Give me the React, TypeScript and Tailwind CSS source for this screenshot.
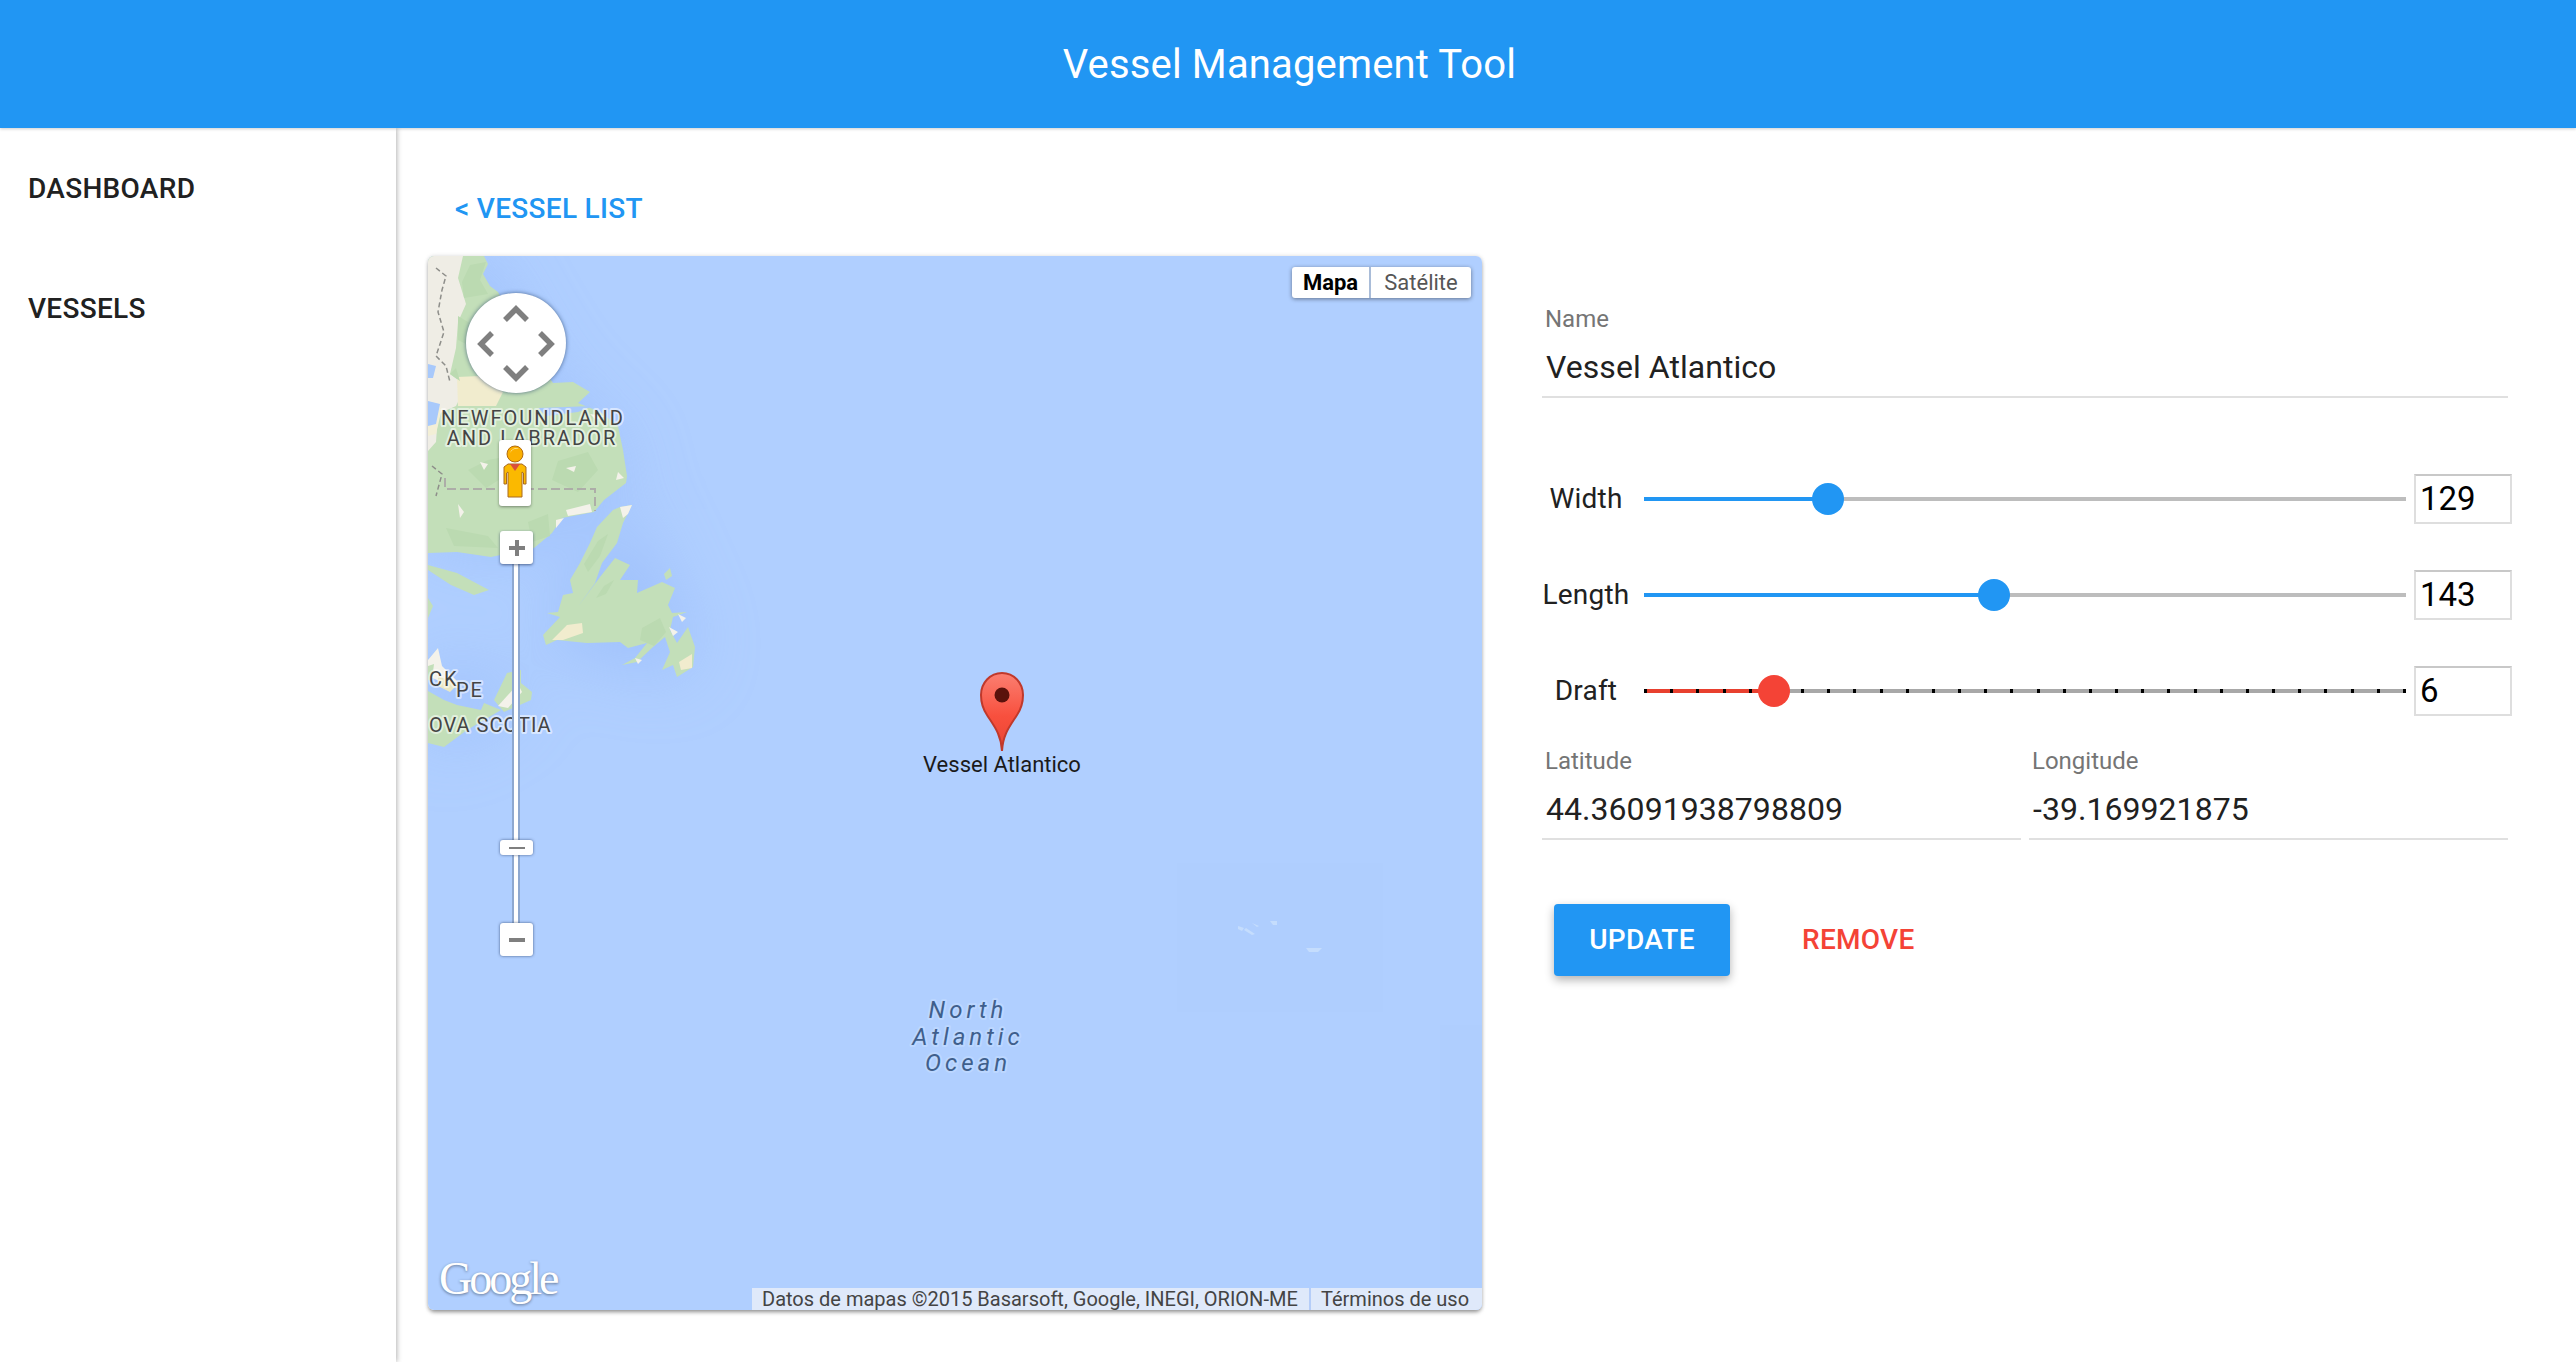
const ticks = Array.from({ length: 30 }, (_, i) => i);

function Slider({ label, value, left, red }: { label: string; value: string; left: string; red?: boolean }) {
  return (
    <div className="flex h-[50px] items-center">
      <div className="w-[88px] text-center text-[28px] tracking-[0.2px] text-[#212121]">{label}</div>
      <div className={`relative ml-[14px] flex h-[4px] w-[762px] justify-between ${red ? "bg-[#a8a8a8]" : "bg-[#bdbdbd]"}`}>
        {red && ticks.map((t) => <span key={t} className="z-10 h-[4px] w-[3px] bg-black" />)}
        <div className={`absolute top-0 left-0 h-[4px] ${left} ${red ? "bg-[#e8402f]" : "bg-[#2196f3]"}`} />
        <div
          className={`absolute top-[-14px] z-20 h-[32px] w-[32px] rounded-full ${left === "w-[184px]" ? "left-[168px]" : left === "w-[350px]" ? "left-[334px]" : "left-[114px]"} ${red ? "bg-[#f44336]" : "bg-[#2196f3]"}`}
        />
      </div>
      <div className="ml-[8px] h-[50px] w-[98px] border-2 border-[#dedede] border-t-[#c8c8c8] pl-[4px] text-[33px] leading-[46px] text-black">
        {value}
      </div>
    </div>
  );
}

function Field({ label, value, className }: { label: string; value: string; className?: string }) {
  return (
    <div className={className}>
      <div className="h-[28px] pl-[3px] text-[24px] leading-[28px] text-[#757575]">{label}</div>
      <div className="mt-[16px] h-[49px] border-b-2 border-[#e0e0e0] pl-[4px] text-[32px] leading-[36px] tracking-[0.05px] text-[#212121]">
        {value}
      </div>
    </div>
  );
}

function MapArt() {
  const label = { paintOrder: "stroke" as const };
  return (
    <svg className="absolute inset-0 h-full w-full" viewBox="0 0 1054 1054">
      <defs>
        <filter id="halo" x="-50%" y="-50%" width="200%" height="200%">
          <feGaussianBlur stdDeviation="34" />
        </filter>
      </defs>
      <rect width="1054" height="1054" fill="#b0cfff" />
      <rect x="749" y="607" width="206" height="149" fill="#afcefe" />
      <rect x="1012" y="769" width="42" height="285" fill="#afcefe" />
      <g filter="url(#halo)" fill="#94b8fa" opacity="0.6">
        <path d="M0 0H56L70 36L125 127L195 194L198 227L106 292L0 297Z" />
        <path d="M204 249L267 391L249 421L115 389L142 324Z" />
        <path d="M0 400L104 436L76 456L16 491L0 487Z" />
      </g>
      {/* mainland */}
      <path
        fill="#c3dfb9"
        d="M0 0H56L60 8L55 18L62 30L70 36L100 90L125 127L145 126L162 136L150 147L172 156L190 170L195 194L199 220L198 227L176 244L166 256L134 262L124 277L106 292L63 301L29 296L0 297Z"
      />
      <path fill="#efede5" d="M0 0H35L30 22L38 48L30 66L28 92L22 118L38 130L28 150L10 158L8 186L0 195Z" />
      <path fill="#f1ecce" d="M29 121L52 120L75 136L68 150L30 150Z" />
      <path fill="#f3efd6" d="M0 150L14 152L8 178L0 180Z" />
      <path fill="#bbdab1" d="M42 9L58 6L52 24L60 38L36 42L34 26Z M30 60L50 72L42 90L30 84Z M32 125L22 118L28 112Z M60 204L82 200L90 212L58 232L40 214Z M130 205L160 196L170 214L150 236L124 224Z M18 272L60 280L70 292L26 290Z M100 266L120 258L122 280L104 286Z" />
      <path fill="#a8c9fb" d="M0 108L8 110L5 122L0 122Z M0 145L12 148L8 168L0 170Z M110 152L165 150L150 156L118 160Z M70 60L76 64L70 70Z" />
      <path fill="#f4f2ea" d="M138 254L162 248L164 256L140 260Z M128 264L136 262L128 272Z M190 216L196 222L188 224Z M30 248L36 256L32 262Z M138 212L148 210L146 216Z M52 206L60 208L56 214Z M162 158L176 160L168 164Z" />
      <path fill="none" stroke="#adadA8" strokeWidth="2" strokeDasharray="9 4" d="M17 222V233H167V255" />
      <path fill="none" stroke="#8e8e8a" strokeWidth="1.5" strokeDasharray="5 3" d="M8 12L18 20L14 34L10 56L16 76L8 100L18 110L22 126M4 210L14 218L8 240" />
      {/* Anticosti */}
      <path fill="#c3dfb9" d="M0 309L29 317L61 334L46 339L23 329L0 314Z" />
      <path fill="#c3dfb9" d="M0 342L5 350L0 362Z" />
      {/* Newfoundland */}
      <path
        fill="#c3dfb9"
        d="M204 249L192 251L185 254L169 271L162 287L152 307L142 324L145 337L135 339L130 356L119 357L132 361L115 379L118 389L129 384L159 387L192 386L200 392L219 387L207 402L194 409L209 406L225 391L237 381L242 396L234 414L245 409L249 421L265 411L267 391L260 371L249 387L242 374L245 361L259 356L244 357L240 349L247 332L234 326L209 337L210 324L192 324L202 309L187 302L172 321L149 352L167 327L174 307L189 287L195 267Z"
      />
      <path fill="#bbdab1" d="M170 285L180 278L172 300L160 316L156 308Z M176 330L186 324L178 338L168 342Z M214 372L232 362L238 376L226 390L212 384Z" />
      <path fill="#f1ecce" d="M124 384L139 369L154 367L155 377L135 384Z M251 406L264 398L264 412L253 414Z" />
      <path fill="#f4f2ea" d="M192 251L204 249L200 258L195 262Z M241 371L250 376L245 380Z M250 358L258 362L254 366Z M207 402L214 404L210 408Z" />
      <path fill="#c3dfb9" d="M236 318L242 312L244 320L238 324Z" />
      {/* Maritimes */}
      <path fill="#c3dfb9" d="M93 414L79 417L66 444L76 456L103 444L104 436L93 427Z" />
      <path fill="#f4f2ea" d="M70 450L90 428L94 436L80 452Z" />
      <path fill="#c3dfb9" d="M0 435L16 444L29 449L53 454L56 447L73 454L39 474L16 491L0 487Z" />
      <path fill="#f4f2ea" d="M0 404L10 392L14 410L30 426L18 428L0 420Z" />
      <path fill="#e9e8c4" d="M10 420L30 428L22 436L10 430Z" />
      <path fill="#c3dfb9" d="M0 410L6 408L4 424L0 424Z" />
      {/* Azores */}
      <path fill="#c5ddfd" d="M810 670L816 672L814 675L810 673Z M818 672L827 678L824 679L816 674Z M824 667L831 670L829 671Z M842 665L849 665L849 669L845 669Z M878 692L894 692L890 696L881 696Z" />
      <g fontFamily="Roboto, sans-serif" style={label} strokeLinejoin="round">
        <g fontSize="20" letterSpacing="2" fill="#444" stroke="#ffffff" strokeOpacity="0.55" strokeWidth="4" textAnchor="middle" style={label}>
          <text x="105" y="169" style={label}>NEWFOUNDLAND</text>
          <text x="104" y="189" style={label}>AND LABRADOR</text>
        </g>
        <g fontSize="20" letterSpacing="2" fill="#444" stroke="#ffffff" strokeOpacity="0.5" strokeWidth="4" style={label}>
          <text x="1" y="430" style={label}>CK</text>
          <text x="28" y="441" style={label}>PE</text>
          <text x="1" y="476" letterSpacing="1" style={label}>OVA SCOTIA</text>
        </g>
        <g fontSize="24" letterSpacing="4" fontStyle="italic" fill="#3f5f8c" stroke="#bcd7ff" strokeWidth="4" textAnchor="middle" style={label}>
          <text x="540" y="762" style={label}>North</text>
          <text x="540" y="789" style={label}>Atlantic</text>
          <text x="540" y="815" style={label}>Ocean</text>
        </g>
        <text x="574" y="516" fontSize="22" fill="#1a1a1a" textAnchor="middle">Vessel Atlantico</text>
      </g>
      {/* pin */}
      <defs>
        <linearGradient id="pin" x1="0" y1="0" x2="0" y2="1">
          <stop offset="0" stopColor="#fb7f71" />
          <stop offset="0.55" stopColor="#f8503e" />
          <stop offset="1" stopColor="#e94432" />
        </linearGradient>
      </defs>
      <path
        d="M574 495C573 478 566 470 559 459C555 453 553 448 553 439C553 427 562 417 574 417C586 417 595 427 595 439C595 448 593 453 589 459C582 470 575 478 574 495Z"
        fill="url(#pin)"
        stroke="#c0392b"
        strokeWidth="2"
      />
      <circle cx="574" cy="439" r="7.5" fill="#5a120c" />
    </svg>
  );
}

export default function App() {
  return (
    <div className="flex h-[1362px] flex-col overflow-hidden bg-white font-[Roboto,sans-serif]">
      <header className="z-20 flex h-[128px] shrink-0 items-center justify-center bg-[#2196f3] pt-[2px] pl-[3px] text-[40px] tracking-[0.15px] text-white shadow-[0_1px_3px_rgba(0,0,0,0.2)]">
        Vessel Management Tool
      </header>
      <div className="flex flex-1">
        <aside className="z-10 w-[396px] shrink-0 bg-white pt-[41px] pl-[28px] text-[28px] font-medium tracking-[0.3px] text-[#212121] shadow-[1px_0_5px_rgba(0,0,0,0.3)]">
          <div className="h-[40px] leading-[40px]">DASHBOARD</div>
          <div className="mt-[80px] h-[40px] leading-[40px]">VESSELS</div>
        </aside>
        <main className="flex-1 pl-[32px]">
          <div className="h-[128px] pt-[61px] pl-[27px] text-[28px] leading-[40px] font-medium tracking-[0.3px] text-[#2196f3]">
            &lt; VESSEL LIST
          </div>
          <div className="flex">
            <div className="relative h-[1054px] w-[1054px] shrink-0 overflow-hidden rounded-[6px] shadow-[0_3px_4px_-1px_rgba(0,0,0,0.4),0_0_4px_rgba(0,0,0,0.15)]">
              <MapArt />
              {/* map controls */}
              <div className="absolute top-[11px] right-[11px] flex h-[31px] overflow-hidden rounded-[3px] bg-white text-[22px] leading-[31px] shadow-[0_1px_4px_rgba(0,0,0,0.45)]">
                <div className="w-[79px] border-r-2 border-[#a9bcd8] text-center font-bold text-black">Mapa</div>
                <div className="w-[100px] text-center text-[#565656]">Satélite</div>
              </div>
              <div className="absolute top-[37px] left-[38px] h-[100px] w-[100px] rounded-full bg-white shadow-[0_0_4px_rgba(40,70,110,0.75)]">
                <svg className="h-full w-full" viewBox="0 0 100 100" fill="none" stroke="#7f7f7f" strokeWidth="5.5">
                  <path d="M39 27L50 16L61 27" />
                  <path d="M39 74L50 85L61 74" />
                  <path d="M26 40L15 51L26 62" />
                  <path d="M74 40L85 51L74 62" />
                </svg>
              </div>
              <div className="absolute top-[184px] left-[71px] h-[66px] w-[32px] rounded-[3px] bg-white shadow-[0_1px_3px_rgba(0,0,0,0.4)]">
                <svg className="h-full w-full" viewBox="0 0 32 66">
                  <path d="M9 24H23L27 27V44H24.5V33L23 32V57H9V32L7.5 33V44H5V27Z" fill="#fbb900" stroke="#a86a20" strokeWidth="1" />
                  <path d="M11 24H21L16 31Z" fill="#d9503a" />
                  <circle cx="16" cy="14" r="8" fill="#fbb000" stroke="#b06a10" strokeWidth="1" />
                  <path d="M11 13A6 6 0 0 1 20 9A8 8 0 0 0 11 13Z" fill="#ffe9a0" />
                </svg>
              </div>
              <div className="absolute top-[304px] left-[84px] h-[370px] w-[8px] border-x-2 border-[#8ea8d0] bg-white" />
              <div className="absolute top-[275px] left-[72px] flex h-[33px] w-[33px] items-center justify-center rounded-[3px] bg-white shadow-[0_1px_3px_rgba(30,50,90,0.65)]">
                <svg className="h-[16px] w-[16px]" viewBox="0 0 16 16" fill="#7f7f7f">
                  <path d="M6 0H10V6H16V10H10V16H6V10H0V6H6Z" />
                </svg>
              </div>
              <div className="absolute top-[584px] left-[72px] flex h-[15px] w-[33px] items-center justify-center rounded-[3px] bg-white shadow-[0_0_3px_rgba(30,50,90,0.7)]">
                <div className="h-[2px] w-[16px] bg-[#7f7f7f]" />
              </div>
              <div className="absolute top-[667px] left-[72px] flex h-[33px] w-[33px] items-center justify-center rounded-[3px] bg-white shadow-[0_0_3px_rgba(30,50,90,0.75)]">
                <div className="h-[4px] w-[16px] bg-[#7f7f7f]" />
              </div>
              <div className="absolute bottom-[6px] left-[11px] font-['Liberation_Serif',serif] text-[46px] leading-[50px] tracking-[-3px] text-white [text-shadow:0_1px_3px_rgba(0,0,0,0.45)]">
                Google
              </div>
              <div className="absolute right-0 bottom-0 flex h-[22px] w-[730px] bg-[#dfe9fa] text-[20px] leading-[22px] whitespace-nowrap text-[#444]">
                <div className="w-[559px] border-r-2 border-[#b5cdf8] pl-[10px]">Datos de mapas ©2015 Basarsoft, Google, INEGI, ORION-ME</div>
                <div className="pl-[10px]">Términos de uso</div>
              </div>
            </div>
            <section className="ml-[60px] w-[970px] pt-[49px]">
              <Field label="Name" value="Vessel Atlantico" className="w-[966px]" />
              <div className="mt-[76px] flex flex-col gap-[46px]">
                <Slider label="Width" value="129" left="w-[184px]" />
                <Slider label="Length" value="143" left="w-[350px]" />
                <Slider label="Draft" value="6" left="w-[130px]" red />
              </div>
              <div className="mt-[31px] flex w-[966px] gap-[8px]">
                <Field label="Latitude" value="44.36091938798809" className="flex-1" />
                <Field label="Longitude" value="-39.169921875" className="flex-1" />
              </div>
              <div className="mt-[64px] flex items-center pl-[12px] text-[28px] font-medium tracking-[0.3px]">
                <button className="h-[72px] w-[176px] rounded-[4px] bg-[#2196f3] text-white shadow-[0_4px_10px_rgba(0,0,0,0.3)]">UPDATE</button>
                <button className="ml-[72px] text-[#f44336]">REMOVE</button>
              </div>
            </section>
          </div>
        </main>
      </div>
    </div>
  );
}
